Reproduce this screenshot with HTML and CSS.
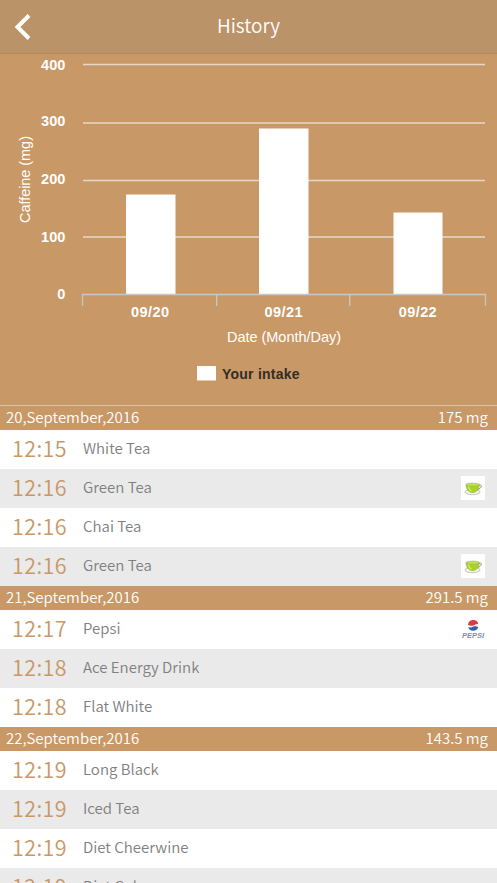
FILE: index.html
```html
<!DOCTYPE html>
<html lang="en">
<head>
    <meta charset="UTF-8">
    <meta name="viewport" content="width=device-width, initial-scale=1">
    <title>History</title>
    <link rel="stylesheet" href="styles.css">
</head>
<body>
    <header class="top-bar">
        <a href="#" class="back" aria-label="Back">
            <svg width="18" height="28" viewBox="0 0 18 28"><path d="M16 2.500 4.500 14l11.500 11.500" /></svg>
        </a>
        <h1>History</h1>
    </header>
    <main>
        <section class="chart">
            <svg width="497" height="351" viewBox="0 54 497 351">
                <g class="grid">
                    <path d="M83 64.500H485M83 123H485M83 180.500H485M83 237H485" />
                </g>
                <g class="bars">
                    <rect x="126" y="194.500" width="49.500" height="99.500" />
                    <rect x="259" y="128.500" width="49.500" height="165.500" />
                    <rect x="393.500" y="212.500" width="49" height="81.500" />
                </g>
                <path class="axis" d="M82.500 306V294.500H485.500V306M216.700 294.500V306M349.700 294.500V306" />
                <g class="y-labels">
                    <text x="65.300" y="70">400</text>
                    <text x="65.300" y="126.300">300</text>
                    <text x="65.300" y="184">200</text>
                    <text x="65.300" y="241.500">100</text>
                    <text x="65.300" y="299">0</text>
                </g>
                <g class="x-labels">
                    <text x="150" y="317" textLength="38">09/20</text>
                    <text x="283.500" y="317" textLength="38">09/21</text>
                    <text x="417.700" y="317" textLength="38">09/22</text>
                </g>
                <g class="titles">
                    <text x="284" y="342" textLength="114">Date (Month/Day)</text>
                    <text transform="translate(29.500 179.500) rotate(-90)" textLength="87">Caffeine (mg)</text>
                </g>
                <rect class="key" x="197" y="366" width="19" height="14.500" />
                <text class="legend" x="222" y="379" textLength="77.500">Your intake</text>
            </svg>
        </section>

        <section class="day">
            <h2><span>20,September,2016</span><span>175 mg</span></h2>
            <ul>
                <li><time>12:15</time><span>White Tea</span></li>
                <li><time>12:16</time><span>Green Tea</span><svg class="thumb"><use href="#tea" /></svg></li>
                <li><time>12:16</time><span>Chai Tea</span></li>
                <li><time>12:16</time><span>Green Tea</span><svg class="thumb"><use href="#tea" /></svg></li>
            </ul>
        </section>
        <section class="day">
            <h2><span>21,September,2016</span><span>291.5 mg</span></h2>
            <ul>
                <li><time>12:17</time><span>Pepsi</span>
                    <svg class="thumb" viewBox="0 0 24 24">
                        <circle cx="12.200" cy="8.500" r="5.200" fill="#f1f3f8" />
                        <path d="M7 8a5.200 5.200 0 0 1 10.300-.8c-2.500-1-4 1.700-6.300 1.600-1.600 0-2.500-.8-4-.8z" fill="#d93c3c" />
                        <path d="M7.200 10.100c2.500 1.500 4.500-.7 6.500-.9 1.500-.2 2.200.4 3.500.8a5.200 5.200 0 0 1-10 .1z" fill="#2b62a8" />
                        <text class="pepsi" x="1" y="20.500" textLength="22" lengthAdjust="spacingAndGlyphs">PEPSI</text>
                    </svg>
                </li>
                <li><time>12:18</time><span>Ace Energy Drink</span></li>
                <li><time>12:18</time><span>Flat White</span></li>
            </ul>
        </section>
        <section class="day">
            <h2><span>22,September,2016</span><span>143.5 mg</span></h2>
            <ul>
                <li><time>12:19</time><span>Long Black</span></li>
                <li><time>12:19</time><span>Iced Tea</span></li>
                <li><time>12:19</time><span>Diet Cheerwine</span></li>
                <li><time>12:19</time><span>Diet Coke</span></li>
            </ul>
        </section>
    </main>

    <svg class="symbols">
        <symbol id="tea" viewBox="0 0 24 24">
            <rect width="24" height="24" fill="#fff" />
            <ellipse cx="11.500" cy="16" rx="7.500" ry="2.700" fill="#f4f6ee" stroke="#b2b9a5" stroke-width=".8" />
            <path d="M17.500 9.500c3-1.200 3.500.6 2.200 2.100-1 1.200-2.200 1.800-3.400 2" fill="none" stroke="#839069" stroke-width="1" />
            <path d="M5 8.500c0 4.500 2.500 8 6.500 8.200 4 0 6.800-3.500 6.900-8.200z" fill="#a8d323" stroke="#8ea45d" stroke-width=".5" />
            <ellipse cx="11.700" cy="8.600" rx="6.700" ry="1.500" fill="#c6e34e" stroke="#9cad70" stroke-width=".6" />
            <path d="M7.500 10.500c.5 2.500 1.500 4 3 4.700" fill="none" stroke="#d8ee77" stroke-width="1.200" />
        </symbol>
    </svg>
</body>
</html>
```

FILE: styles.css
```css
body{
    margin: 0;
    height: 883px;
    overflow: hidden;
    background-color: #C89866;
    color: #FFF;
    font-family: "Noto Sans CJK SC", "Noto Sans", sans-serif;
}
.top-bar{
    display: grid;
    grid-template-columns: 50px 1fr 50px;
    align-items: center;
    box-sizing: border-box;
    height: 54px;
    background-color: #BB9369;
    border-bottom: 1px solid #B3885D;
}
.back{
    display: flex;
    padding-left: 13px;
}
.back path{
    fill: none;
    stroke: #FFF;
    stroke-width: 4;
}
h1{
    margin: 0;
    padding-bottom: 4px;
    font-size: 19px;
    font-weight: 350;
    line-height: 48px;
    text-align: center;
}
.chart{
    height: 351px;
}
.chart svg{
    display: block;
    font-family: "Liberation Sans", Arial, sans-serif;
    font-size: 14.5px;
    fill: #FFF;
}
.grid{
    stroke: #E5D7CB;
    stroke-width: 1.5;
}
.axis{
    fill: none;
    stroke: #C9C7C6;
    stroke-width: 1.3;
}
.y-labels{
    font-weight: bold;
    text-anchor: end;
}
.x-labels{
    font-weight: bold;
    text-anchor: middle;
}
.titles{
    text-anchor: middle;
}
.legend{
    font-weight: bold;
    font-size: 14px;
    fill: #332D27;
}
.day h2{
    display: flex;
    justify-content: space-between;
    box-sizing: border-box;
    height: 24px;
    margin: 0;
    padding: 0 9px 0 6px;
    background-color: #C89866;
    font-size: 15px;
    font-weight: 350;
    line-height: 21px;
}
.chart + .day h2{
    height: 25px;
    border-top: 1px solid #E0C4A6;
}
.day ul{
    margin: 0;
    padding: 0;
    list-style: none;
}
.day li{
    display: flex;
    align-items: center;
    box-sizing: border-box;
    height: 39px;
    padding: 0 12px 4px;
    background-color: #FFF;
    color: #808080;
    font-size: 15px;
    font-weight: 350;
    line-height: 35px;
}
.day li:nth-child(even){
    background-color: #EAEAEA;
}
time{
    width: 71px;
    color: #C89866;
    font-size: 21.5px;
    letter-spacing: .4px;
}
.thumb{
    width: 24px;
    height: 24px;
    margin-top: 2px;
    margin-left: auto;
}
.pepsi{
    font: italic bold 6.5px "Liberation Sans", sans-serif;
    fill: #6F91C0;
}
.symbols{
    display: none;
}
```
